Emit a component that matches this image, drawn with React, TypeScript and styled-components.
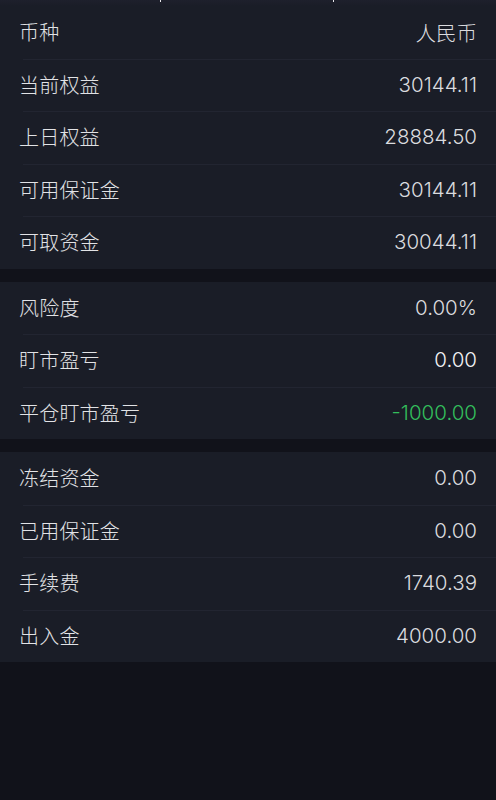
import React from 'react';
import styled, { createGlobalStyle } from 'styled-components';

const GlobalStyle = createGlobalStyle`
  html, body {
    margin: 0;
    padding: 0;
    background: #11121a;
  }
  body {
    font-family: "Inter", "Noto Sans CJK SC", sans-serif;
    -webkit-font-smoothing: antialiased;
  }
`;

const Page = styled.div`
  position: relative;
  width: 496px;
  min-height: 800px;
  background: #11121a;
  display: flex;
  flex-direction: column;
  gap: 13px;
`;

const TopEdge = styled.div`
  height: 6px;
  background: linear-gradient(#1e202c, #1a1d27);
  margin-bottom: -13px;
`;

const Tick = styled.span<{ $left: number }>`
  position: absolute;
  top: 0;
  left: ${(p) => p.$left}px;
  width: 1px;
  height: 2px;
  background: #e8e8ec;
`;

const Card = styled.section`
  background: #1a1d27;
  display: flex;
  flex-direction: column;
`;

const Row = styled.div`
  position: relative;
  height: 52.5px;
  display: flex;
  align-items: center;
  justify-content: space-between;
  padding: 0 19px 1px 19px;
  box-sizing: border-box;

  & + &::before {
    content: '';
    position: absolute;
    top: 0;
    left: 23px;
    right: 0;
    height: 1px;
    background: #222531;
  }
`;

const Label = styled.span`
  font-family: "Noto Sans CJK SC", sans-serif;
  font-size: 20px;
  font-weight: 300;
  color: #e2e3e6;
  letter-spacing: 0.2px;
`;

type Tone = 'normal' | 'bright' | 'green';

const Value = styled.span<{ $tone: Tone }>`
  font-family: "Inter", "Noto Sans CJK SC", sans-serif;
  font-size: 20.5px;
  font-weight: ${(p) => (p.$tone === 'bright' ? 350 : 300)};
  color: ${(p) =>
    p.$tone === 'green' ? '#33bf5c' : p.$tone === 'bright' ? '#f2f2f5' : '#dadbdf'};
`;

type Item = { label: string; value: string; tone?: Tone };

const sections: Item[][] = [
  [
    { label: '币种', value: '人民币' },
    { label: '当前权益', value: '30144.11' },
    { label: '上日权益', value: '28884.50' },
    { label: '可用保证金', value: '30144.11' },
    { label: '可取资金', value: '30044.11' },
  ],
  [
    { label: '风险度', value: '0.00%' },
    { label: '盯市盈亏', value: '0.00', tone: 'bright' },
    { label: '平仓盯市盈亏', value: '-1000.00', tone: 'green' },
  ],
  [
    { label: '冻结资金', value: '0.00' },
    { label: '已用保证金', value: '0.00' },
    { label: '手续费', value: '1740.39' },
    { label: '出入金', value: '4000.00' },
  ],
];

export default function App() {
  return (
    <>
      <GlobalStyle />
      <Page>
        <TopEdge />
        <Tick $left={160} />
        <Tick $left={333} />
        {sections.map((items, i) => (
          <Card key={i}>
            {items.map((it) => (
              <Row key={it.label}>
                <Label>{it.label}</Label>
                <Value $tone={it.tone ?? 'normal'}>{it.value}</Value>
              </Row>
            ))}
          </Card>
        ))}
      </Page>
    </>
  );
}
